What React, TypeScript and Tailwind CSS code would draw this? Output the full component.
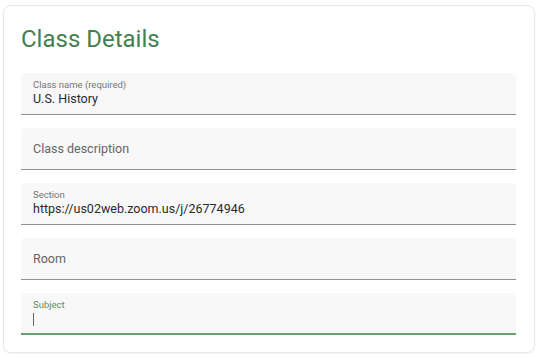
import React from 'react';

type FieldProps = {
  label: string;
  value?: string;
  focused?: boolean;
};

const Field: React.FC<FieldProps> = ({ label, value, focused }) => {
  if (focused) {
    return (
      <div className="h-[42px] rounded-t-[4px] bg-[#f8f8f8] border-b-2 border-[#6a9f70] pl-3 pt-[6px] flex flex-col">
        <span className="text-[9.5px] leading-[11px] text-[#5b8f62]">{label}</span>
        <span className="mt-[3px] h-[13px] w-px bg-[#666]" />
      </div>
    );
  }
  if (value) {
    return (
      <div className="h-[42px] rounded-t-[4px] bg-[#f8f8f8] border-b border-[#909090] pl-3 pt-[6px] flex flex-col">
        <span className="text-[9.5px] leading-[11px] text-[#757575]">{label}</span>
        <span className="text-[12.5px] leading-[18px] text-[#2a2a2a]">{value}</span>
      </div>
    );
  }
  return (
    <div className="h-[42px] rounded-t-[4px] bg-[#f8f8f8] border-b border-[#909090] pl-3 flex items-center">
      <span className="text-[12.5px] leading-[18px] text-[#646464]">{label}</span>
    </div>
  );
};

export default function App() {
  return (
    <div className="w-[540px] h-[357px] bg-white pt-[5px] pl-[3px] font-['Roboto',sans-serif]">
      <div className="w-[532px] h-[348px] rounded-[8px] border border-[#e8e8e8] shadow-[0_1px_2px_rgba(0,0,0,0.05)] px-[17px] pt-[17px]">
        <h1 className="text-[24px] leading-[32px] text-[#467f4f] mb-[18px]">Class Details</h1>
        <div className="w-[495px] flex flex-col gap-[13px]">
          <Field label="Class name (required)" value="U.S. History" />
          <Field label="Class description" />
          <Field label="Section" value="https://us02web.zoom.us/j/26774946" />
          <Field label="Room" />
          <Field label="Subject" focused />
        </div>
      </div>
    </div>
  );
}
